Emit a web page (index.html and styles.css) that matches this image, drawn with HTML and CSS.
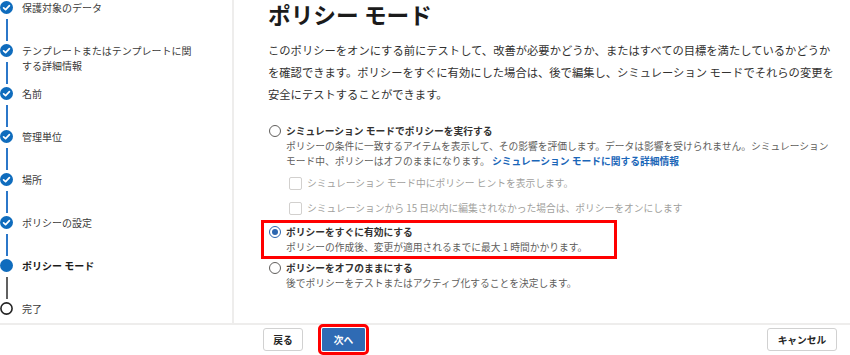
FILE: index.html
```html
<!DOCTYPE html>
<html lang="ja">
<head>
<meta charset="utf-8">
<title>ポリシー モード</title>
<link rel="stylesheet" href="styles.css">
</head>
<body>
<div class="page">
  <div class="wizard">
    <nav class="steps">
      <div class="step done">
        <div class="rail"><svg class="dot" viewBox="0 0 13 13"><circle cx="6.5" cy="6.5" r="6.5" fill="#0f6cbd"/><path d="M3.6 6.8 L5.6 8.7 L9.4 4.6" fill="none" stroke="#fff" stroke-width="1.7" stroke-linecap="round" stroke-linejoin="round"/></svg><span class="line"></span></div>
        <div class="label">保護対象のデータ</div>
      </div>
      <div class="step done">
        <div class="rail"><svg class="dot" viewBox="0 0 13 13"><circle cx="6.5" cy="6.5" r="6.5" fill="#0f6cbd"/><path d="M3.6 6.8 L5.6 8.7 L9.4 4.6" fill="none" stroke="#fff" stroke-width="1.7" stroke-linecap="round" stroke-linejoin="round"/></svg><span class="line"></span></div>
        <div class="label">テンプレートまたはテンプレートに関する詳細情報</div>
      </div>
      <div class="step done">
        <div class="rail"><svg class="dot" viewBox="0 0 13 13"><circle cx="6.5" cy="6.5" r="6.5" fill="#0f6cbd"/><path d="M3.6 6.8 L5.6 8.7 L9.4 4.6" fill="none" stroke="#fff" stroke-width="1.7" stroke-linecap="round" stroke-linejoin="round"/></svg><span class="line"></span></div>
        <div class="label">名前</div>
      </div>
      <div class="step done">
        <div class="rail"><svg class="dot" viewBox="0 0 13 13"><circle cx="6.5" cy="6.5" r="6.5" fill="#0f6cbd"/><path d="M3.6 6.8 L5.6 8.7 L9.4 4.6" fill="none" stroke="#fff" stroke-width="1.7" stroke-linecap="round" stroke-linejoin="round"/></svg><span class="line"></span></div>
        <div class="label">管理単位</div>
      </div>
      <div class="step done">
        <div class="rail"><svg class="dot" viewBox="0 0 13 13"><circle cx="6.5" cy="6.5" r="6.5" fill="#0f6cbd"/><path d="M3.6 6.8 L5.6 8.7 L9.4 4.6" fill="none" stroke="#fff" stroke-width="1.7" stroke-linecap="round" stroke-linejoin="round"/></svg><span class="line"></span></div>
        <div class="label">場所</div>
      </div>
      <div class="step done">
        <div class="rail"><svg class="dot" viewBox="0 0 13 13"><circle cx="6.5" cy="6.5" r="6.5" fill="#0f6cbd"/><path d="M3.6 6.8 L5.6 8.7 L9.4 4.6" fill="none" stroke="#fff" stroke-width="1.7" stroke-linecap="round" stroke-linejoin="round"/></svg><span class="line"></span></div>
        <div class="label">ポリシーの設定</div>
      </div>
      <div class="step current">
        <div class="rail"><svg class="dot" viewBox="0 0 13 13"><circle cx="6.5" cy="6.5" r="6.5" fill="#0f6cbd"/></svg><span class="line"></span></div>
        <div class="label">ポリシー モード</div>
      </div>
      <div class="step todo">
        <div class="rail"><svg class="dot" viewBox="0 0 13 13"><circle cx="6.5" cy="6.5" r="5.6" fill="#fff" stroke="#242424" stroke-width="1.6"/></svg></div>
        <div class="label">完了</div>
      </div>
    </nav>

    <main class="content">
      <h1 class="title">ポリシー モード</h1>
      <p class="intro">このポリシーをオンにする前にテストして、改善が必要かどうか、またはすべての目標を満たしているかどうかを確認できます。ポリシーをすぐに有効にした場合は、後で編集し、シミュレーション モードでそれらの変更を安全にテストすることができます。</p>

      <div class="options">
        <div class="option">
          <span class="radio"></span>
          <div class="option-body">
            <div class="option-label">シミュレーション モードでポリシーを実行する</div>
            <div class="option-desc">ポリシーの条件に一致するアイテムを表示して、その影響を評価します。データは影響を受けられません。シミュレーション モード中、ポリシーはオフのままになります。 <a class="link" href="#">シミュレーション モードに関する詳細情報</a></div>
            <div class="check first"><span class="box"></span><span>シミュレーション モード中にポリシー ヒントを表示します。</span></div>
            <div class="check second"><span class="box"></span><span>シミュレーションから 15 日以内に編集されなかった場合は、ポリシーをオンにします</span></div>
          </div>
        </div>

        <div class="option selected">
          <span class="radio checked"></span>
          <div class="option-body">
            <div class="option-label">ポリシーをすぐに有効にする</div>
            <div class="option-desc">ポリシーの作成後、変更が適用されるまでに最大 1 時間かかります。</div>
          </div>
        </div>

        <div class="option last">
          <span class="radio"></span>
          <div class="option-body">
            <div class="option-label">ポリシーをオフのままにする</div>
            <div class="option-desc">後でポリシーをテストまたはアクティブ化することを決定します。</div>
          </div>
        </div>
      </div>
    </main>
  </div>

  <footer class="footer">
    <div class="nav-buttons">
      <button class="btn btn-back">戻る</button>
      <button class="btn btn-primary">次へ</button>
    </div>
    <button class="btn btn-cancel">キャンセル</button>
  </footer>
</div>
</body>
</html>
```

FILE: styles.css
```css
* { box-sizing: border-box; }

html, body {
  margin: 0;
  padding: 0;
  background: #ffffff;
}

body {
  font-family: "Noto Sans CJK JP", "Noto Sans", sans-serif;
  color: #323130;
}

.page {
  width: 850px;
  height: 355px;
  overflow: hidden;
  display: flex;
  flex-direction: column;
}

.wizard {
  height: 323px;
  display: flex;
  flex-shrink: 0;
}

/* ---------- steps ---------- */
.steps {
  width: 234px;
  flex-shrink: 0;
  border-right: 2px solid #eeedec;
  padding-top: 1px;
  display: flex;
  flex-direction: column;
  overflow: hidden;
}

.step {
  height: 43px;
  flex-shrink: 0;
  display: flex;
  gap: 9px;
}

.rail {
  width: 13px;
  display: flex;
  flex-direction: column;
  align-items: center;
  flex-shrink: 0;
}

.dot {
  width: 13px;
  height: 13px;
  flex-shrink: 0;
  display: block;
}

.line {
  width: 2px;
  flex: 1;
  margin: 5px 0 3px;
  background: #2b77c9;
}

.step.current .line {
  background: #616161;
}

.label {
  font-size: 10px;
  line-height: 15px;
  margin-top: -1px;
  width: 176px;
  color: #3b3a39;
}

.step.current .label {
  font-weight: 700;
  color: #1b1b1b;
}

/* ---------- content ---------- */
.content {
  flex: 1;
  padding-left: 34px;
}

.title {
  margin: 0;
  padding-top: 1px;
  font-size: 22.7px;
  line-height: 28px;
  font-weight: 700;
  color: #1b1b1b;
}

.intro {
  margin: 10px 0 0;
  width: 572px;
  font-size: 11.3px;
  line-height: 22px;
  color: #323130;
}

.options {
  margin-top: 18px;
  display: flex;
  flex-direction: column;
}

.option {
  display: flex;
  gap: 5px;
}

.radio {
  width: 12px;
  height: 12px;
  margin: 2px 0 0 1px;
  border: 1px solid #605e5c;
  border-radius: 50%;
  flex-shrink: 0;
  background: #fff;
  display: flex;
  align-items: center;
  justify-content: center;
}

.radio.checked {
  border-color: #2b66b0;
}

.radio.checked::after {
  content: "";
  width: 6px;
  height: 6px;
  border-radius: 50%;
  background: #2b66b0;
}

.option-body {
  width: 552px;
}

.option-label {
  font-size: 9.75px;
  line-height: 16px;
  font-weight: 700;
  color: #323130;
}

.option-desc {
  font-size: 9.75px;
  line-height: 15px;
  color: #605e5c;
}

.link {
  color: #1a66b8;
  text-decoration: none;
  font-weight: 700;
}

.check {
  display: flex;
  align-items: center;
  gap: 5px;
  margin-left: 3px;
  height: 16px;
  font-size: 9.75px;
  color: #a19f9d;
}

.check.first { margin-top: 6px; }
.check.second { margin-top: 9px; }

.box {
  width: 13px;
  height: 13px;
  border: 1px solid #d2d0ce;
  border-radius: 2px;
  background: #fff;
  flex-shrink: 0;
}

.option.selected {
  margin: 7px 0 0 -4px;
  padding: 1px 4px 1px 4px;
  width: 350px;
  outline: 3px solid #ff0000;
}

.option.selected .option-body {
  width: auto;
}

.option.last {
  margin-top: 4px;
}

/* ---------- footer ---------- */
.footer {
  border-top: 2px solid #eeedec;
  padding: 3px 13px 0 263px;
  display: flex;
  justify-content: space-between;
  align-items: flex-start;
}

.nav-buttons {
  display: flex;
  gap: 19px;
}

.btn {
  font-family: inherit;
  height: 23px;
  padding: 0;
  border: 1px solid #d1d1d1;
  border-radius: 3px;
  background: #fff;
  color: #242424;
  font-size: 9.75px;
  font-weight: 700;
  display: flex;
  align-items: center;
  justify-content: center;
}

.btn-back { width: 40px; }

.btn-primary {
  width: 43px;
  border-radius: 1px;
  background: #2f6bb4;
  border-color: #2f6bb4;
  color: #fff;
  outline: 3px solid #ff0000;
  outline-offset: 1px;
}

.btn-cancel { width: 70px; }
```
